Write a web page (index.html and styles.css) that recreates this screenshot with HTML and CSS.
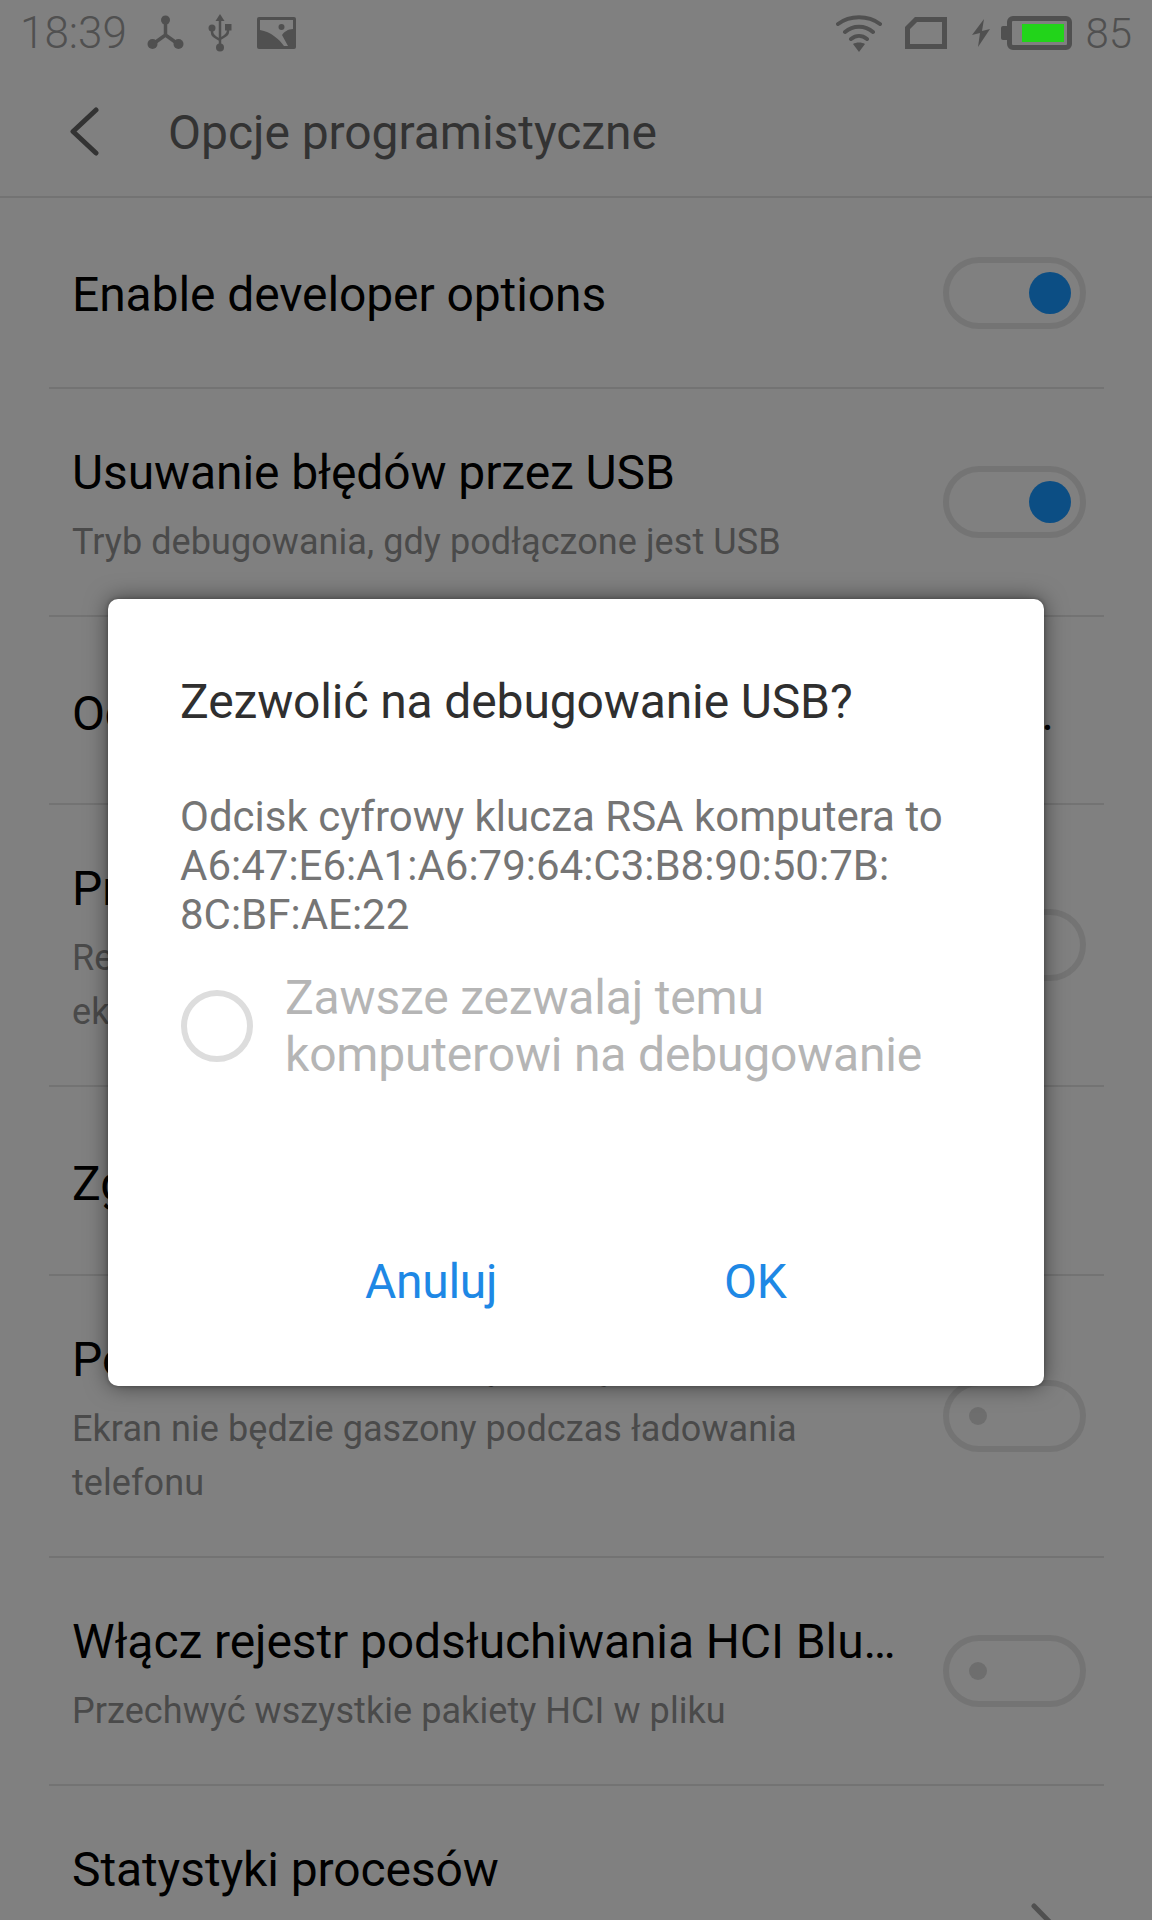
FILE: index.html
```html
<!DOCTYPE html>
<html lang="pl">
<head>
    <meta charset="UTF-8">
    <title>Opcje programistyczne</title>
    <link rel="stylesheet" href="styles.css">
</head>
<body>
    <div class="screen">
        <!-- pasek statusu -->
        <div class="status-bar">
            <span class="status-time">18:39</span>
            <svg class="ico-tree" width="37" height="36" viewBox="0 0 37 36">
                <path d="M18.500 5V20M18.500 20L6 29M18.500 20L31 29" fill="none" stroke="#505050" stroke-width="3.500"/>
                <circle cx="18.500" cy="5" r="4.500" fill="#505050"/>
                <circle cx="5.500" cy="29" r="5" fill="#505050"/>
                <circle cx="31.500" cy="29" r="5" fill="#505050"/>
            </svg>
            <svg class="ico-usb" width="24" height="38" viewBox="0 0 24 38">
                <path d="M12 0L16.500 7H7.500Z" fill="#505050"/>
                <path d="M12 5V34M4 13V18C4 22 7 23 12 26M20 12V17C20 21 17 22 12 25" fill="none" stroke="#505050" stroke-width="2.500"/>
                <circle cx="12" cy="33.500" r="4" fill="#505050"/>
                <circle cx="4" cy="14" r="3.500" fill="#505050"/>
                <rect x="17" y="10" width="6.500" height="6.500" fill="#505050"/>
            </svg>
            <svg class="ico-pic" width="39" height="32" viewBox="0 0 39 32">
                <path d="M2 0H37Q39 0 39 2V30Q39 32 37 32H2Q0 32 0 30V2Q0 0 2 0Z" fill="#505050"/>
                <path d="M3 3H36V12C31 12 27 15 25 18L31 29H27C22 22 14 15 3 13Z" fill="#808080"/>
                <circle cx="24.500" cy="10" r="3" fill="#505050"/>
            </svg>
            <span class="status-gap"></span>
            <svg class="ico-wifi" width="46" height="38" viewBox="0 0 46 38">
                <path d="M2 10C14 1 32 1 44 10M9 18C17 11 29 11 37 18M15 25C20 21 26 21 31 25" fill="none" stroke="#505050" stroke-width="4" stroke-linecap="round"/>
                <path d="M17 30C20 28 26 28 29 30L23 38Z" fill="#505050"/>
            </svg>
            <svg class="ico-sim" width="42" height="32" viewBox="0 0 42 32">
                <path d="M2.500 29.500V11L11 2.500H39.500V29.500Z" fill="none" stroke="#505050" stroke-width="5"/>
            </svg>
            <svg class="ico-bolt" width="18" height="28" viewBox="0 0 18 28">
                <path d="M12 0L0 16L8 14L6 28L18 10L10 12Z" fill="#505050"/>
            </svg>
            <div class="battery">
                <div class="battery-fill"></div>
            </div>
            <span class="status-level">85</span>
        </div>

        <div class="header">
            <svg class="header-back" width="30" height="49" viewBox="0 0 30 49">
                <path d="M26 3L3 24.500L26 46" fill="none" stroke="#333" stroke-width="5" stroke-linecap="round" stroke-linejoin="round"/>
            </svg>
            <span class="header-title">Opcje programistyczne</span>
        </div>

        <!-- lista opcji -->
        <div class="row single">
            <div class="row-text"><div class="row-title">Enable developer options</div></div>
            <div class="toggle on"><span class="knob"></span></div>
        </div>
        <div class="row">
            <div class="row-text">
                <div class="row-title">Usuwanie błędów przez USB</div>
                <div class="row-sub">Tryb debugowania, gdy podłączone jest USB</div>
            </div>
            <div class="toggle on"><span class="knob"></span></div>
        </div>
        <div class="row single row-oem">
            <div class="row-text"><div class="row-title">Odblokowanie OEM i zezwolenie na odblokow…</div></div>
        </div>
        <div class="row">
            <div class="row-text">
                <div class="row-title">Przechwytywanie ekranu</div>
                <div class="row-sub">Rejestruj obraz<br>ekranu</div>
            </div>
            <div class="toggle"><span class="knob"></span></div>
        </div>
        <div class="row single row-bug">
            <div class="row-text"><div class="row-title">Zgłoś błąd</div></div>
        </div>
        <div class="row">
            <div class="row-text">
                <div class="row-title">Pozostaw ekran włączony</div>
                <div class="row-sub">Ekran nie będzie gaszony podczas ładowania<br>telefonu</div>
            </div>
            <div class="toggle"><span class="knob"></span></div>
        </div>
        <div class="row">
            <div class="row-text">
                <div class="row-title">Włącz rejestr podsłuchiwania HCI Bluetooth</div>
                <div class="row-sub">Przechwyć wszystkie pakiety HCI w pliku</div>
            </div>
            <div class="toggle"><span class="knob"></span></div>
        </div>
        <div class="row row-last">
            <div class="row-text"><div class="row-title">Statystyki procesów</div></div>
            <svg class="row-arrow" width="27" height="49" viewBox="0 0 27 49">
                <path d="M3 3L24 24.500L3 46" fill="none" stroke="#505050" stroke-width="5" stroke-linecap="round" stroke-linejoin="round"/>
            </svg>
        </div>

        <!-- okno dialogowe -->
        <div class="dialog">
            <h2 class="dialog-title">Zezwolić na debugowanie USB?</h2>
            <p class="dialog-body">Odcisk cyfrowy klucza RSA komputera to<br>A6:47:E6:A1:A6:79:64:C3:B8:90:50:7B:<br>8C:BF:AE:22</p>
            <div class="dialog-check">
                <span class="check-circle"></span>
                <span class="check-label">Zawsze zezwalaj temu<br>komputerowi na debugowanie</span>
            </div>
            <div class="dialog-buttons">
                <span class="dialog-btn">Anuluj</span>
                <span class="dialog-btn">OK</span>
            </div>
        </div>
    </div>
</body>
</html>
```

FILE: styles.css
```css
body {
    margin: 0;
    font-family: Roboto, "Noto Sans", sans-serif;
    background: #808080;
}

.screen {
    position: relative;
    width: 1152px;
    height: 1920px;
    overflow: hidden;
    background: #808080;
}

.status-bar {
    display: flex;
    align-items: center;
    height: 66px;
    padding: 0 20px;
    color: #505050;
    box-sizing: border-box;
}

.status-time {
    font-size: 44px;
    font-weight: 300;
    width: 127px;
}

.ico-tree { margin-right: 24px; }
.ico-usb { margin-right: 25px; }
.status-gap { flex: 1; }
.ico-wifi { margin-right: 23px; }
.ico-sim { margin-right: 25px; }
.ico-bolt { margin-right: 12px; }

.battery {
    position: relative;
    box-sizing: border-box;
    width: 65px;
    height: 34px;
    margin-left: 5px;
    padding: 3px 3px 3px 10px;
    border: 5px solid #505050;
    border-radius: 6px;
}

.battery::before {
    content: "";
    position: absolute;
    left: -11px;
    top: 5px;
    width: 6px;
    height: 14px;
    background: #505050;
    border-radius: 2px 0 0 2px;
}

.battery-fill {
    height: 100%;
    background: #22d41a;
}

.status-level {
    font-size: 42px;
    font-weight: 300;
    margin-left: 13px;
}

.header {
    display: flex;
    align-items: center;
    height: 130px;
    padding-left: 70px;
    border-bottom: 2px solid #737373;
}

.header-title {
    margin: 2px 0 0 68px;
    font-size: 48px;
    letter-spacing: -0.05px;
    color: #333;
}

.row {
    display: flex;
    align-items: center;
    box-sizing: border-box;
    margin: 0 48px 0 49px;
    padding: 0 18px 0 23px;
    border-bottom: 2px solid #737373;
}

.row-text {
    flex: 1;
    min-width: 0;
    align-self: flex-start;
    padding: 54px 40px 46px 0;
}

.single .row-text {
    padding: 67px 0 62px;
}

.row-oem {
    height: 188px;
}

.row-oem .row-title {
    letter-spacing: -0.55px;
}

.row-bug {
    height: 189px;
}

.row-last {
    height: 282px;
    border-bottom: none;
    padding-right: 46px;
}

.row-title {
    font-size: 48px;
    line-height: 60px;
    letter-spacing: -0.1px;
    color: #000;
    white-space: nowrap;
    overflow: hidden;
    text-overflow: ellipsis;
}

.row-sub {
    margin-top: 12px;
    font-size: 36px;
    line-height: 54px;
    letter-spacing: 0.07px;
    color: #4a4a4a;
}

.toggle {
    flex: none;
    display: flex;
    align-items: center;
    box-sizing: border-box;
    width: 143px;
    height: 72px;
    padding-left: 20px;
    border: 6px solid #747474;
    border-radius: 36px;
}

.knob {
    width: 18px;
    height: 18px;
    border-radius: 50%;
    background: #6e6e6e;
}

.toggle.on {
    justify-content: flex-end;
    padding: 0 9px 0 0;
}

.toggle.on .knob {
    width: 42px;
    height: 42px;
    background: #0c4e84;
}

.dialog {
    position: absolute;
    left: 108px;
    top: 599px;
    box-sizing: border-box;
    width: 936px;
    height: 787px;
    padding: 77px 0 0 72px;
    background: #fff;
    border-radius: 10px;
    box-shadow: 0 0 4px rgba(0, 0, 0, 0.3), 0 0 22px rgba(0, 0, 0, 0.5);
}

.dialog-title {
    margin: 0;
    font-size: 48px;
    font-weight: 400;
    line-height: 52px;
    letter-spacing: -0.13px;
    color: #2f2f2f;
}

.dialog-body {
    margin: 64px 0 0;
    font-size: 42px;
    line-height: 49px;
    color: #757575;
}

.dialog-check {
    display: flex;
    align-items: center;
    margin-top: 30px;
}

.check-circle {
    flex: none;
    box-sizing: border-box;
    width: 72px;
    height: 72px;
    margin-left: 1px;
    border: 6px solid #ddd;
    border-radius: 50%;
}

.check-label {
    margin-left: 32px;
    font-size: 48px;
    line-height: 57px;
    letter-spacing: -0.18px;
    color: #b5b5b5;
}

.dialog-buttons {
    display: flex;
    gap: 227px;
    margin-top: 169px;
    padding-left: 185px;
}

.dialog-btn {
    font-size: 48px;
    line-height: 60px;
    letter-spacing: -0.3px;
    color: #1e88e5;
}
```
